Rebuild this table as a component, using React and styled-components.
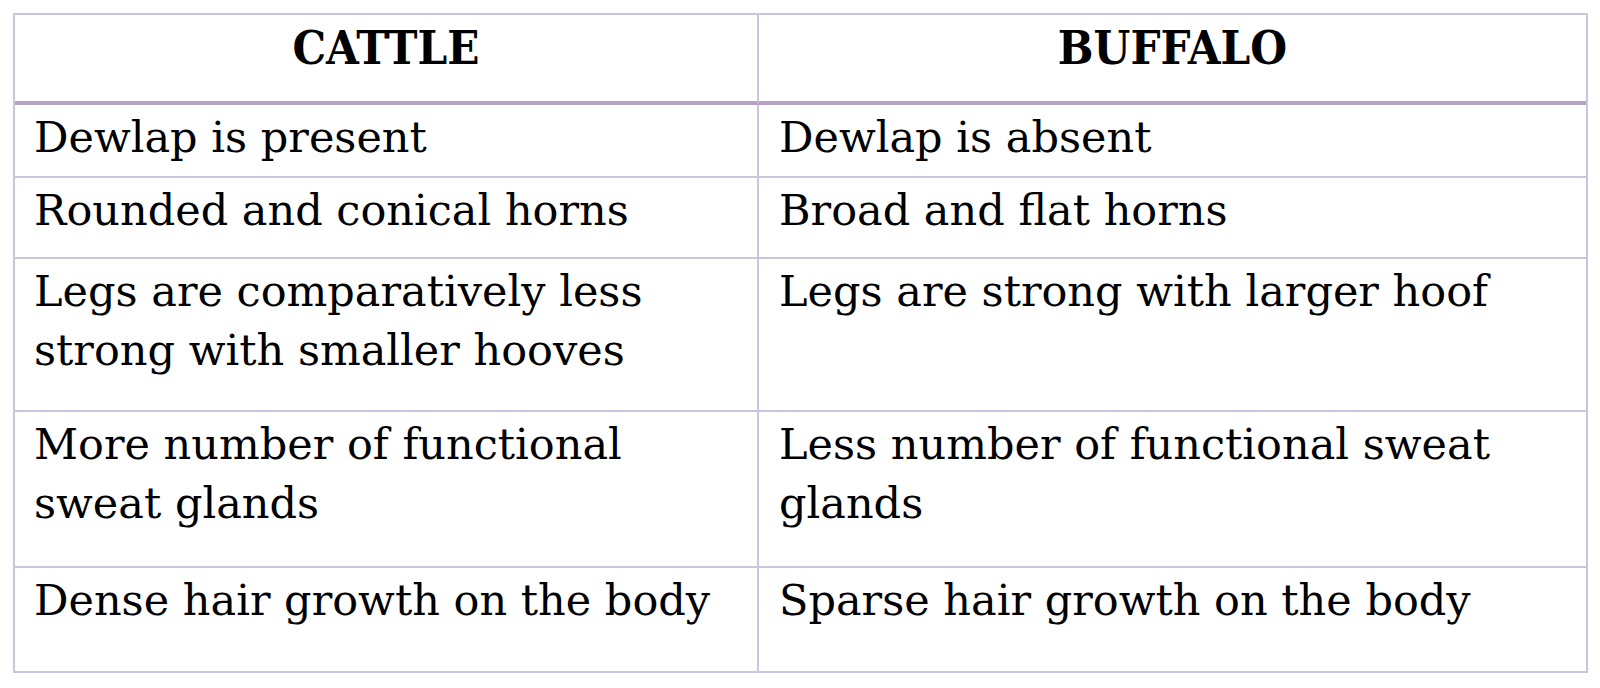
import React from 'react'
import styled, { createGlobalStyle } from 'styled-components'

const GlobalStyle = createGlobalStyle`
  html, body {
    margin: 0;
    padding: 0;
    background: #fff;
  }
  body {
    font-family: 'DejaVu Serif', 'Liberation Serif', serif;
    color: #000;
  }
`

const line = '#cdc5dc'

const Page = styled.div`
  padding: 13px 0 0 13px;
`

const Table = styled.div`
  box-sizing: border-box;
  width: 1575px;
  display: grid;
  grid-template-columns: 744px 1fr;
  grid-template-rows: 90px 73px 81px 153px 156px 103px;
  border: 2px solid ${line};
`

const HeadCell = styled.div`
  box-sizing: border-box;
  padding-top: 3px;
  text-align: center;
  font-family: 'DejaVu Serif Condensed', 'DejaVu Serif', serif;
  font-stretch: condensed;
  font-size: 47px;
  line-height: 59px;
  font-weight: 700;
  border-bottom: 4px solid #b4a3c9;
  border-right: ${(p) => (p.$last ? 'none' : `2px solid ${line}`)};
`

const Cell = styled.div`
  box-sizing: border-box;
  padding: 3px 12px 0 ${(p) => (p.$last ? 20 : 19)}px;
  font-size: 43px;
  line-height: 59px;
  white-space: nowrap;
  border-bottom: ${(p) => (p.$bottom ? 'none' : `2px solid ${line}`)};
  border-right: ${(p) => (p.$last ? 'none' : `2px solid ${line}`)};
`

const Line = styled.div``

const rows = [
  [['Dewlap is present'], ['Dewlap is absent']],
  [['Rounded and conical horns'], ['Broad and flat horns']],
  [['Legs are comparatively less', 'strong with smaller hooves'], ['Legs are strong with larger hoof']],
  [['More number of functional', 'sweat glands'], ['Less number of functional sweat', 'glands']],
  [['Dense hair growth on the body'], ['Sparse hair growth on the body']],
]

export default function App() {
  return (
    <Page>
      <GlobalStyle />
      <Table>
        <HeadCell>CATTLE</HeadCell>
        <HeadCell $last>BUFFALO</HeadCell>
        {rows.map(([a, b], i) => {
          const bottom = i === rows.length - 1
          return (
            <React.Fragment key={a[0]}>
              <Cell $bottom={bottom}>
                {a.map((t) => (
                  <Line key={t}>{t}</Line>
                ))}
              </Cell>
              <Cell $bottom={bottom} $last>
                {b.map((t) => (
                  <Line key={t}>{t}</Line>
                ))}
              </Cell>
            </React.Fragment>
          )
        })}
      </Table>
    </Page>
  )
}
